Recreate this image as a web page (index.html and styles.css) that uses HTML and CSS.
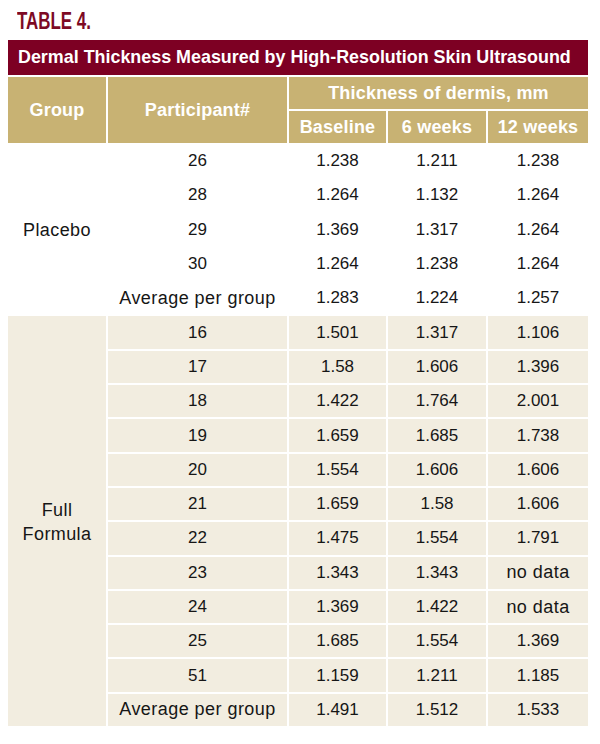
FILE: index.html
```html
<!DOCTYPE html>
<html>
<head>
<meta charset="utf-8">
<link rel="stylesheet" href="styles.css">
</head>
<body>
<div class="page">
  <h1 class="label"><span class="label-text">TABLE 4.</span></h1>
  <div class="table">
    <div class="caption">Dermal Thickness Measured by High-Resolution Skin Ultrasound</div>
    <div class="th group-h">Group</div>
    <div class="th part-h">Participant#</div>
    <div class="th span3">Thickness of dermis, mm</div>
    <div class="th">Baseline</div>
    <div class="th">6 weeks</div>
    <div class="th">12 weeks</div>

    <div class="grp placebo">Placebo</div>
    <div class="td">26</div><div class="td">1.238</div><div class="td">1.211</div><div class="td">1.238</div>
    <div class="td">28</div><div class="td">1.264</div><div class="td">1.132</div><div class="td">1.264</div>
    <div class="td">29</div><div class="td">1.369</div><div class="td">1.317</div><div class="td">1.264</div>
    <div class="td">30</div><div class="td">1.264</div><div class="td">1.238</div><div class="td">1.264</div>
    <div class="td word">Average per group</div><div class="td">1.283</div><div class="td">1.224</div><div class="td">1.257</div>

    <div class="grp full">Full<br>Formula</div>
    <div class="td sh">16</div><div class="td sh">1.501</div><div class="td sh">1.317</div><div class="td sh">1.106</div>
    <div class="td sh">17</div><div class="td sh">1.58</div><div class="td sh">1.606</div><div class="td sh">1.396</div>
    <div class="td sh">18</div><div class="td sh">1.422</div><div class="td sh">1.764</div><div class="td sh">2.001</div>
    <div class="td sh">19</div><div class="td sh">1.659</div><div class="td sh">1.685</div><div class="td sh">1.738</div>
    <div class="td sh">20</div><div class="td sh">1.554</div><div class="td sh">1.606</div><div class="td sh">1.606</div>
    <div class="td sh">21</div><div class="td sh">1.659</div><div class="td sh">1.58</div><div class="td sh">1.606</div>
    <div class="td sh">22</div><div class="td sh">1.475</div><div class="td sh">1.554</div><div class="td sh">1.791</div>
    <div class="td sh">23</div><div class="td sh">1.343</div><div class="td sh">1.343</div><div class="td sh word">no data</div>
    <div class="td sh">24</div><div class="td sh">1.369</div><div class="td sh">1.422</div><div class="td sh word">no data</div>
    <div class="td sh">25</div><div class="td sh">1.685</div><div class="td sh">1.554</div><div class="td sh">1.369</div>
    <div class="td sh">51</div><div class="td sh">1.159</div><div class="td sh">1.211</div><div class="td sh">1.185</div>
    <div class="td sh word">Average per group</div><div class="td sh">1.491</div><div class="td sh">1.512</div><div class="td sh">1.533</div>
  </div>
</div>
</body>
</html>
```

FILE: styles.css
```css
html, body {
  margin: 0;
  padding: 0;
  background: #ffffff;
}

.page {
  padding: 0 12px 0 8px;
  font-family: "Liberation Sans", Arial, sans-serif;
}

.label {
  margin: 0;
  padding: 9px 0 0 9px;
  height: 31px;
  box-sizing: border-box;
  font-family: "Liberation Sans", Arial, sans-serif;
  font-weight: bold;
  font-size: 23.5px;
  line-height: 24px;
  color: #7d0a24;
}

.label-text {
  display: inline-block;
  transform: scaleX(0.72);
  transform-origin: left center;
}

.table {
  margin-top: 9px;
  width: 580px;
  display: grid;
  grid-template-columns: 98px 179px 97px 98px 100px;
  grid-template-rows: 35px 32px 32px repeat(17, 32.3px);
  gap: 2px;
}

.caption {
  grid-column: 1 / 6;
  background: #7d0023;
  color: #ffffff;
  font-weight: bold;
  font-size: 17.9px;
  display: flex;
  align-items: center;
  padding-left: 10px;
}

.th {
  background: #c8b273;
  color: #ffffff;
  font-weight: bold;
  font-size: 18px;
  letter-spacing: 0.2px;
  display: flex;
  align-items: center;
  justify-content: center;
}

.group-h, .part-h {
  grid-row: 2 / 4;
}

.span3 {
  grid-column: 3 / 6;
}

.grp {
  display: flex;
  align-items: center;
  justify-content: center;
  text-align: center;
  font-size: 18px;
  letter-spacing: 0.4px;
  line-height: 24px;
  color: #161616;
}

.placebo {
  grid-column: 1;
  grid-row: 4 / 9;
}

.full {
  grid-column: 1;
  grid-row: 9 / 21;
  background: #f2ede0;
  padding-top: 2px;
}

.td {
  display: flex;
  align-items: center;
  justify-content: center;
  font-size: 17px;
  color: #161616;
}

.word {
  font-size: 18px;
  letter-spacing: 0.45px;
}

.sh {
  background: #f2ede0;
}
```
